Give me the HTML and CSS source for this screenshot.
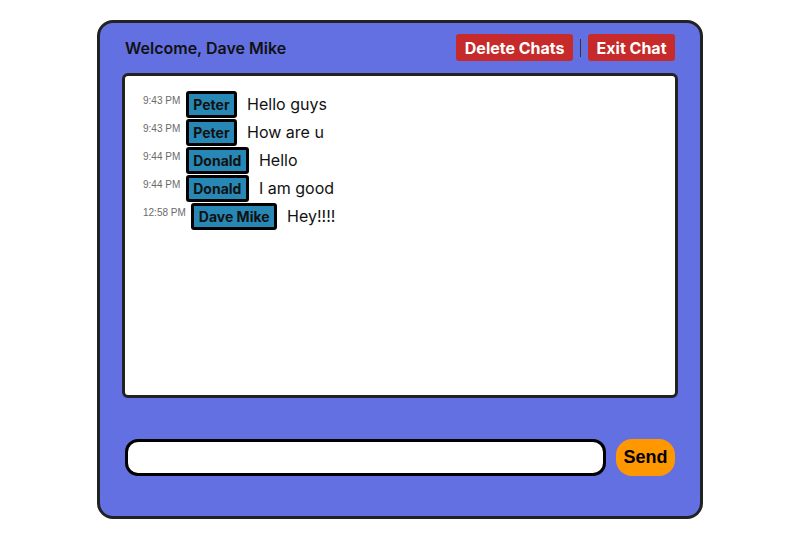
FILE: index.html
```html
<!DOCTYPE html>
<html>
<head>
<meta charset="utf-8">
<link rel="stylesheet" href="styles.css">
</head>
<body>
<div class="card">
  <header class="header">
    <h1 class="welcome">Welcome, Dave Mike</h1>
    <div class="actions">
      <button class="btn-red">Delete Chats</button>
      <span class="sep"></span>
      <button class="btn-red">Exit Chat</button>
    </div>
  </header>
  <div class="chat">
    <div class="msg"><span class="time">9:43 PM</span><span class="name">Peter</span><span class="text">Hello guys</span></div>
    <div class="msg"><span class="time">9:43 PM</span><span class="name">Peter</span><span class="text">How are u</span></div>
    <div class="msg"><span class="time">9:44 PM</span><span class="name">Donald</span><span class="text">Hello</span></div>
    <div class="msg"><span class="time">9:44 PM</span><span class="name">Donald</span><span class="text">I am good</span></div>
    <div class="msg"><span class="time">12:58 PM</span><span class="name">Dave Mike</span><span class="text">Hey!!!!</span></div>
  </div>
  <div class="composer">
    <input class="input" type="text">
    <button class="send">Send</button>
  </div>
</div>
</body>
</html>
```

FILE: styles.css
```css
* { box-sizing: border-box; }
html, body { margin: 0; padding: 0; background: #fff; }
body { font-family: Inter, "Noto Sans", sans-serif; color: #111; }
.card {
  width: 606px;
  height: 499px;
  margin: 20px 0 0 97px;
  background: #6270e2;
  border: 3px solid #222;
  border-radius: 16px;
  display: flex;
  flex-direction: column;
  padding: 0 22px;
}
.header {
  display: flex;
  align-items: center;
  justify-content: space-between;
  padding: 11px 3px 12px 3px;
}
.welcome {
  margin: 0;
  font-size: 16px;
  font-weight: 600;
  color: #111;
}
.actions { display: flex; align-items: center; gap: 7px; }
.btn-red {
  height: 27px;
  border: none;
  border-radius: 3px;
  background: #c62a2a;
  color: #fff;
  font-family: Inter, sans-serif;
  font-weight: 700;
  font-size: 16px;
  padding: 0 8.5px;
}
.sep { width: 1px; height: 18px; background: #333; }
.chat {
  height: 325px;
  background: #fff;
  border: 3px solid #222;
  border-radius: 6px;
  padding: 15px 18px;
  display: flex;
  flex-direction: column;
  gap: 1px;
}
.msg { display: flex; align-items: flex-start; height: 27px; }
.time {
  font-family: "Liberation Sans", Arial, sans-serif;
  font-size: 10px;
  color: #6a6a6a;
  margin-top: 4px;
  margin-right: 5.5px;
}
.name {
  height: 27px;
  background: #2788b6;
  border: 3px solid #000;
  border-radius: 3px;
  font-weight: 700;
  font-size: 14px;
  line-height: 21px;
  padding: 0 4.5px;
  color: #111;
}
.text {
  font-size: 16px;
  margin-left: 10px;
  line-height: 27px;
  color: #111;
}
.composer {
  display: flex;
  align-items: center;
  gap: 10px;
  margin-top: 41px;
  padding: 0 3px;
}
.input {
  flex: 1;
  height: 37px;
  border: 3px solid #000;
  border-radius: 13px;
  background: #fff;
  outline: none;
}
.send {
  width: 59px;
  height: 37px;
  border: none;
  border-radius: 16px;
  background: #ff9800;
  font-family: "Liberation Sans", Arial, sans-serif;
  font-weight: 700;
  font-size: 18px;
  color: #000;
  padding: 0;
}
```
